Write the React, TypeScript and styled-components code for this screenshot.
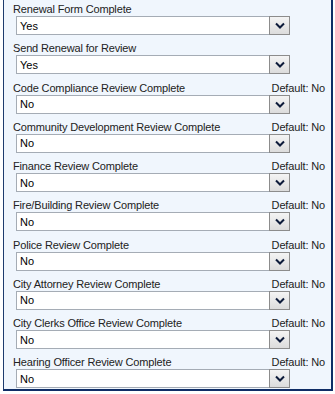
import React from 'react'
import styled, { createGlobalStyle } from 'styled-components'

const GlobalStyle = createGlobalStyle`
  html, body {
    margin: 0;
    padding: 0;
    background: #ffffff;
  }
  body {
    font-family: "Liberation Sans", Arial, sans-serif;
  }
`

const fields = [
  { label: 'Renewal Form Complete', value: 'Yes' },
  { label: 'Send Renewal for Review', value: 'Yes' },
  { label: 'Code Compliance Review Complete', value: 'No', hint: 'Default: No' },
  { label: 'Community Development Review Complete', value: 'No', hint: 'Default: No' },
  { label: 'Finance Review Complete', value: 'No', hint: 'Default: No' },
  { label: 'Fire/Building Review Complete', value: 'No', hint: 'Default: No' },
  { label: 'Police Review Complete', value: 'No', hint: 'Default: No' },
  { label: 'City Attorney Review Complete', value: 'No', hint: 'Default: No' },
  { label: 'City Clerks Office Review Complete', value: 'No', hint: 'Default: No' },
  { label: 'Hearing Officer Review Complete', value: 'No', hint: 'Default: No' },
]

const Panel = styled.div`
  margin-left: 3px;
  width: 330px;
  height: 391px;
  box-sizing: border-box;
  background: #f0f6fd;
  border-left: 1px solid #1d3b6e;
  border-right: 2px solid #0f2d66;
  border-bottom: 2px solid #0f2d66;
  padding: 0 6px 0 9px;
  display: flex;
  flex-direction: column;
`

const Field = styled.div`
  height: 39.25px;
  flex-shrink: 0;
  display: flex;
  flex-direction: column;
`

const LabelRow = styled.div`
  height: 16px;
  flex-shrink: 0;
  display: flex;
  justify-content: space-between;
  align-items: flex-end;
  font-size: 11px;
  letter-spacing: -0.15px;
  line-height: 12px;
  color: #222;
  padding-bottom: 1px;
  box-sizing: border-box;
`

const SelectBox = styled.div`
  margin-left: 3px;
  width: 274px;
  height: 19px;
  flex-shrink: 0;
  box-sizing: border-box;
  border: 1px solid #a5acb5;
  background: #ffffff;
  display: flex;
  align-items: center;
  position: relative;
  font-size: 11px;
  color: #000;
  padding-left: 3px;
`

const DropButton = styled.div`
  position: absolute;
  right: -1px;
  top: -1px;
  width: 21px;
  height: 19px;
  box-sizing: border-box;
  border: 1px solid #8c8c8c;
  background: linear-gradient(#f4f4f4, #dcdcdc);
  display: flex;
  align-items: center;
  justify-content: center;
`

const Chevron = () => (
  <svg width="10" height="7" viewBox="0 0 10 7">
    <path d="M1 1.5 L5 5.5 L9 1.5" fill="none" stroke="#0d1b3a" strokeWidth="2" />
  </svg>
)

export default function App() {
  return (
    <>
      <GlobalStyle />
      <Panel>
        {fields.map((f) => (
          <Field key={f.label}>
            <LabelRow>
              <span>{f.label}</span>
              {f.hint && <span>{f.hint}</span>}
            </LabelRow>
            <SelectBox>
              {f.value}
              <DropButton>
                <Chevron />
              </DropButton>
            </SelectBox>
          </Field>
        ))}
      </Panel>
    </>
  )
}
